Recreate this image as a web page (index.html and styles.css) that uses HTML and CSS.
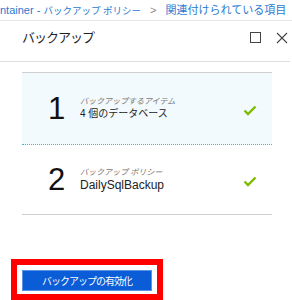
FILE: index.html
```html
<!DOCTYPE html>
<html lang="ja">
<head>
    <meta charset="UTF-8">
    <meta name="viewport" content="width=device-width, initial-scale=1.0">
    <title>バックアップ</title>
    <link rel="stylesheet" href="styles.css">
</head>
<body>

    <div class="crumbs">
        <span class="crumb">ntainer - <span class="crumb-kana">バックアップ ポリシー</span></span>
        <span class="crumb-sep">&gt;</span>
        <span class="crumb">関連付けられている項目</span>
    </div>

    <div class="blade-header">
        <h1 class="blade-title">バックアップ</h1>
        <div class="blade-controls">
            <svg class="ctrl" width="11" height="11" viewBox="0 0 11 11">
                <rect x="0.5" y="0.5" width="10" height="10" fill="none" stroke="#444" stroke-width="1"/>
            </svg>
            <svg class="ctrl" width="12" height="12" viewBox="0 0 12 12">
                <path d="M1 1 L11 11 M11 1 L1 11" stroke="#444" stroke-width="1.1" fill="none"/>
            </svg>
        </div>
    </div>

    <div class="steps">
        <div class="step step-active">
            <div class="step-num">1</div>
            <div class="step-text">
                <div class="step-label">バックアップするアイテム</div>
                <div class="step-value">4 個のデータベース</div>
            </div>
            <svg class="step-check" width="14" height="11" viewBox="0 0 14 11">
                <path d="M1.5 5.5 L5 9 L12.5 1.5" stroke="#7fba00" stroke-width="2.4" fill="none"/>
            </svg>
        </div>
        <div class="step">
            <div class="step-num">2</div>
            <div class="step-text">
                <div class="step-label">バックアップ ポリシー</div>
                <div class="step-value latin">DailySqlBackup</div>
            </div>
            <svg class="step-check" width="14" height="11" viewBox="0 0 14 11">
                <path d="M1.5 5.5 L5 9 L12.5 1.5" stroke="#7fba00" stroke-width="2.4" fill="none"/>
            </svg>
        </div>
    </div>

    <div class="highlight">
        <button class="enable-btn">バックアップの有効化</button>
    </div>

</body>
</html>
```

FILE: styles.css
```css
body {
    margin: 0;
    background: #fff;
    font-family: "Liberation Sans", "Noto Sans CJK JP", sans-serif;
    color: #222;
    width: 292px;
    overflow: hidden;
}

.crumbs {
    height: 20px;
    line-height: 20px;
    display: flex;
    gap: 8px;
    overflow: hidden;
    white-space: nowrap;
    font-size: 11px;
    border-bottom: 1px solid #e6e6e6;
}
.crumb {
    color: #2b79d0;
    flex-shrink: 0;
}
.crumb-kana {
    font-size: 9.5px;
}
.crumb-sep {
    color: #888;
    flex-shrink: 0;
    padding: 0 1px;
}

.blade-header {
    display: flex;
    justify-content: space-between;
    height: 41px;
    padding: 9px 0 0 22px;
    box-sizing: border-box;
    width: 290px;
    border-bottom: 1px solid #ddd;
}
.blade-title {
    margin: 0;
    font-size: 13px;
    font-weight: normal;
    letter-spacing: -1px;
    line-height: 16px;
    color: #222;
}
.blade-controls {
    display: flex;
    gap: 15px;
    padding-top: 2px;
    padding-right: 2px;
}

.steps {
    margin: 10px 20px 0 22px;
    width: 250px;
}
.step {
    display: flex;
    align-items: center;
    height: 69px;
    border-bottom: 1px solid #d0d0d0;
}
.step-active {
    height: 71px;
    background: #f2fafd;
    border-top: 1px solid #cfcfcf;
    border-bottom: 1px dotted #35bde0;
}
.step-num {
    width: 30px;
    margin-left: 26px;
    font-size: 31px;
    line-height: 32px;
    color: #111;
}
.step-text {
    flex: 1;
    padding-left: 2px;
}
.step-label {
    font-size: 8px;
    color: #777;
    line-height: 11px;
    font-style: italic;
}
.step-value {
    font-size: 10px;
    line-height: 14px;
    color: #222;
}
.step-value.latin {
    font-size: 12px;
}
.step-check {
    margin: 3px 15px 0 0;
}

.highlight {
    margin: 44px 0 0 11px;
    width: 152px;
    height: 41px;
    box-sizing: border-box;
    border: 6px solid #ff0000;
    padding: 5px 5px 3px 5px;
}
.enable-btn {
    display: block;
    width: 130px;
    height: 21px;
    padding: 0;
    background: #0b5cd7;
    border: 1px solid #5a92e6;
    color: #fff;
    font-family: "Noto Sans CJK JP", sans-serif;
    font-size: 10px;
    letter-spacing: -1px;
}
```
